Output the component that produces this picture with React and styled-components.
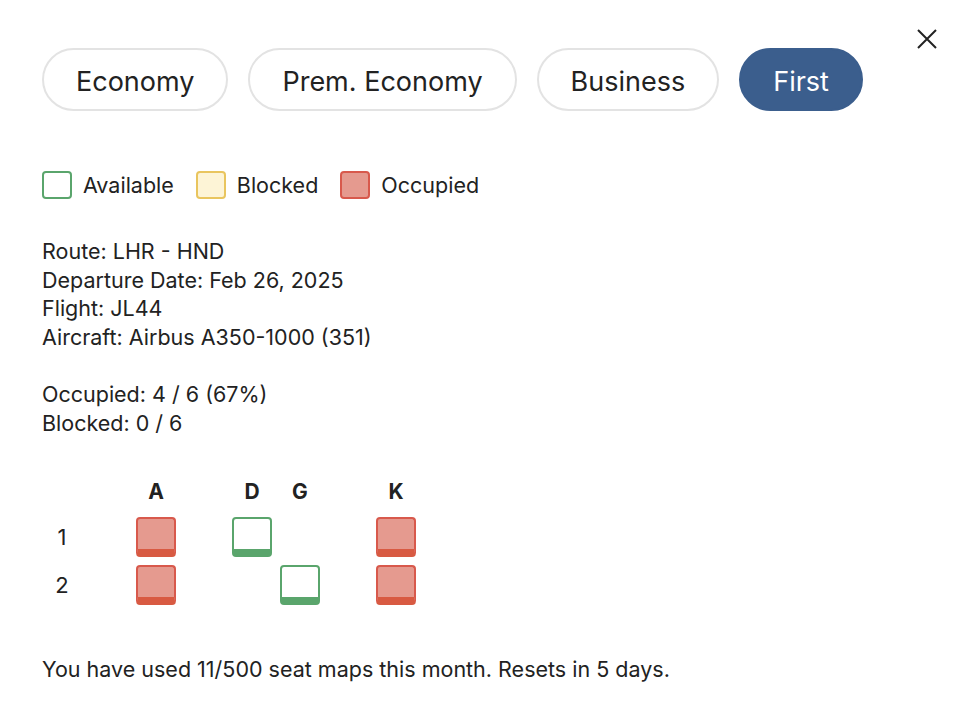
import React, { useState } from "react";
import styled, { createGlobalStyle } from "styled-components";

const GlobalStyle = createGlobalStyle`
  html, body {
    margin: 0;
    padding: 0;
    background: #fff;
  }
  body {
    font-family: Inter, Roboto, "Noto Sans", sans-serif;
    color: #222;
  }
`;

const cabins = ["Economy", "Prem. Economy", "Business", "First"];

const columns = ["A", null, "D", "G", null, "K"];

const rows = [
  { num: 1, seats: { A: "occupied", D: "available", K: "occupied" } },
  { num: 2, seats: { A: "occupied", G: "available", K: "occupied" } },
];

const info = [
  "Route: LHR - HND",
  "Departure Date: Feb 26, 2025",
  "Flight: JL44",
  "Aircraft: Airbus A350-1000 (351)",
];

const seatColors = {
  occupied: { fill: "#e59a8f", border: "#d8594c", bar: "#d85a42" },
  available: { fill: "#ffffff", border: "#5aa56c", bar: "#5aa56c" },
  blocked: { fill: "#fdf4d6", border: "#e9c55e", bar: "#e9c55e" },
};

const legend = [
  { key: "available", label: "Available" },
  { key: "blocked", label: "Blocked" },
  { key: "occupied", label: "Occupied" },
];

const Page = styled.div`
  position: relative;
  padding: 48px 42px 0;
`;

const CloseButton = styled.button`
  position: absolute;
  top: 27px;
  right: 29px;
  width: 24px;
  height: 24px;
  padding: 0;
  border: 0;
  background: transparent;
  cursor: pointer;
  display: flex;
  align-items: center;
  justify-content: center;
`;

const Tabs = styled.div`
  display: flex;
  gap: 20px;
`;

const Pill = styled.button`
  height: 63px;
  padding: 3px 32px 0;
  border-radius: 32px;
  border: 2px solid ${(p) => (p.$active ? "#3b5e8d" : "#e3e3e3")};
  background: ${(p) => (p.$active ? "#3b5e8d" : "#fff")};
  color: ${(p) => (p.$active ? "#fff" : "#222")};
  font-family: inherit;
  font-size: 27px;
  cursor: pointer;
`;

const Legend = styled.div`
  display: flex;
  align-items: center;
  gap: 22px;
  margin-top: 60px;
`;

const LegendItem = styled.div`
  display: flex;
  align-items: center;
  gap: 11px;
  font-size: 21.5px;
`;

const Swatch = styled.span`
  width: 30px;
  height: 28px;
  box-sizing: border-box;
  border-radius: 4px;
  border: 2px solid ${(p) => seatColors[p.$kind].border};
  background: ${(p) => seatColors[p.$kind].fill};
`;

const Info = styled.div`
  margin-top: 38px;
  font-size: 21.5px;
  line-height: 28.5px;
`;

const Stats = styled(Info)`
  margin-top: 29px;
`;

const Grid = styled.div`
  display: grid;
  grid-template-columns: 40px 38px repeat(6, 40px);
  grid-template-rows: 30px;
  grid-auto-rows: 40px;
  column-gap: 8px;
  row-gap: 8px;
  margin-top: 42px;
  align-items: center;
  justify-items: center;
`;

const ColLabel = styled.div`
  align-self: start;
  line-height: 26px;
  font-size: 21px;
  font-weight: 700;
`;

const RowLabel = styled.div`
  font-size: 22px;
`;

const Seat = styled.div`
  width: 40px;
  height: 40px;
  box-sizing: border-box;
  border-radius: 4px;
  border: 2px solid ${(p) => seatColors[p.$kind].border};
  border-bottom-width: 8px;
  border-bottom-color: ${(p) => seatColors[p.$kind].bar};
  background: ${(p) => seatColors[p.$kind].fill};
`;

const Footer = styled.p`
  margin: 51px 0 0;
  font-size: 21.5px;
`;

export default function App() {
  const [cabin, setCabin] = useState("First");

  return (
    <>
      <GlobalStyle />
      <Page>
        <CloseButton aria-label="Close">
          <svg width="20" height="20" viewBox="0 0 20 20" fill="none">
            <path d="M1 1L19 19M19 1L1 19" stroke="#222" strokeWidth="2" />
          </svg>
        </CloseButton>

        <Tabs>
          {cabins.map((c) => (
            <Pill key={c} $active={c === cabin} onClick={() => setCabin(c)}>
              {c}
            </Pill>
          ))}
        </Tabs>

        <Legend>
          {legend.map((l) => (
            <LegendItem key={l.key}>
              <Swatch $kind={l.key} />
              {l.label}
            </LegendItem>
          ))}
        </Legend>

        <Info>
          {info.map((line) => (
            <div key={line}>{line}</div>
          ))}
        </Info>

        <Stats>
          <div>Occupied: 4 / 6 (67%)</div>
          <div>Blocked: 0 / 6</div>
        </Stats>

        <Grid>
          <div />
          <div />
          {columns.map((c, i) => (
            <ColLabel key={i}>{c}</ColLabel>
          ))}
          {rows.map((r) => (
            <React.Fragment key={r.num}>
              <RowLabel>{r.num}</RowLabel>
              <div />
              {columns.map((c, i) =>
                c && r.seats[c] ? (
                  <Seat key={i} $kind={r.seats[c]} />
                ) : (
                  <div key={i} />
                )
              )}
            </React.Fragment>
          ))}
        </Grid>

        <Footer>You have used 11/500 seat maps this month. Resets in 5 days.</Footer>
      </Page>
    </>
  );
}
